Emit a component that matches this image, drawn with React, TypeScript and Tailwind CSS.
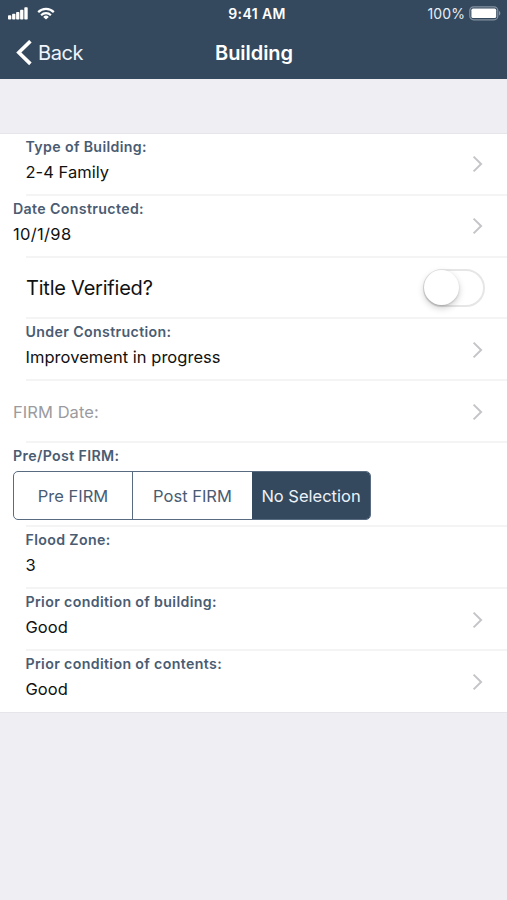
import type { ReactNode } from "react";

function Chevron({ offset = "mt-px" }: { offset?: string }) {
  return (
    <svg className={`mr-[24px] shrink-0 ${offset}`} width="11" height="18" viewBox="0 0 11 18" fill="none">
      <path d="M1.6 1.6 9.1 9 1.6 16.4" stroke="#c5c5c9" strokeWidth="2" />
    </svg>
  );
}

function Line() {
  return <div className="ml-[26px] h-[2px] shrink-0 bg-[#f4f4f5]" />;
}

function Label({ children }: { children: ReactNode }) {
  return (
    <div className="h-[25px] text-[14.2px] leading-[26px] font-semibold tracking-[0.35px] whitespace-nowrap text-[#4a5c72]">
      {children}
    </div>
  );
}

type FieldProps = {
  label: string;
  value: string;
  arrow?: boolean;
  flush?: boolean;
  track?: string;
  offset?: string;
};

function Field({ label, value, arrow = true, flush = false, track = "tracking-[0.03px]", offset }: FieldProps) {
  return (
    <div className={`flex h-[60px] items-center justify-between ${flush ? "pl-[13px]" : "pl-[25.5px]"}`}>
      <div className="h-[60px]">
        <Label>{label}</Label>
        <div className={`h-[26px] text-[16.5px] leading-[26px] whitespace-nowrap text-[#111] ${track}`}>{value}</div>
      </div>
      {arrow && <Chevron offset={offset} />}
    </div>
  );
}

function StatusBar() {
  return (
    <div className="grid h-[27px] grid-cols-3 items-center text-[14px] text-white">
      <div className="flex items-center gap-[9px] pl-[8px]">
        <svg width="20" height="13" viewBox="0 0 20 13" fill="#fff">
          <rect x="0" y="8.3" width="3.3" height="4.2" rx="0.8" />
          <rect x="4.1" y="6.8" width="3.3" height="5.7" rx="0.8" />
          <rect x="8.1" y="5" width="3.3" height="7.5" rx="0.8" />
          <rect x="12.1" y="2.8" width="3.3" height="9.7" rx="0.8" />
          <rect x="16.3" y="0.2" width="3.4" height="12.3" rx="0.8" />
        </svg>
        <svg width="18" height="13" viewBox="0 0 18 13" fill="none" stroke="#fff" strokeWidth="2.2">
          <path d="M1.2 5.1a11 11 0 0 1 15.6 0" />
          <path d="M4.1 8.2a7 7 0 0 1 9.8 0" />
          <path d="M9 12.6 6.2 9.9a4 4 0 0 1 5.6 0Z" fill="#fff" stroke="none" />
        </svg>
      </div>
      <div className="h-[27px] pl-[7px] text-center leading-[28px] font-semibold tracking-[0.4px] whitespace-nowrap">9:41 AM</div>
      <div className="flex h-[27px] items-center justify-end gap-[4px] pr-[6px]">
        <span className="leading-[28px] tracking-[0.1px] text-[#e6edf5]">100%</span>
        <svg width="32" height="15" viewBox="0 0 32 15">
          <rect x="0.8" y="0.8" width="28" height="13" rx="3.8" fill="none" stroke="#8492a1" strokeWidth="1.2" />
          <rect x="2.4" y="2.6" width="24.8" height="9.4" rx="1.6" fill="#fff" />
          <path d="M30 5v4.6c1.8-.7 1.8-3.9 0-4.6Z" fill="#8492a1" />
        </svg>
      </div>
    </div>
  );
}

export default function App() {
  return (
    <div className="h-[900px] w-[507px] overflow-hidden bg-[#eeeef3] font-['Inter','Liberation_Sans',sans-serif]">
      <header className="h-[79px] bg-[#34495e] text-white">
        <StatusBar />
        <div className="grid h-[52px] grid-cols-3">
          <div className="flex h-[52px] items-center gap-[5px] pl-[16px]">
            <svg width="17" height="26" viewBox="0 0 17 26" fill="none">
              <path d="M14.4 1.2 2.8 12.5l11.6 11.4" stroke="#fff" strokeWidth="3.6" />
            </svg>
            <span className="text-[20px] leading-[52px] tracking-[-0.4px] text-[#eef4fb]">Back</span>
          </div>
          <h1 className="h-[52px] pl-[1px] text-center text-[20px] leading-[52px] font-semibold tracking-[-0.05px]">Building</h1>
        </div>
      </header>

      <main className="mt-[54px] border-y border-[#e6e6ea] bg-white">
        <Field label="Type of Building:" value="2-4 Family" offset="mt-0" />
        <Line />
        <Field label="Date Constructed:" value="10/1/98" track="tracking-[0.33px]" offset="mt-0" flush />
        <Line />
        <div className="flex h-[59px] items-center justify-between pr-[22px] pl-[26px]">
          <span className="text-[20px] tracking-[-0.22px] text-[#111]">Title Verified?</span>
          <div className="flex h-[38px] w-[62px] items-center rounded-full border-2 border-[#e6e6e7] bg-white">
            <div className="-ml-px size-[35px] shrink-0 rounded-full bg-white shadow-[0_3px_7px_rgba(0,0,0,0.2),0_1px_2px_rgba(0,0,0,0.14)]" />
          </div>
        </div>
        <Line />
        <Field label="Under Construction:" value="Improvement in progress" />
        <Line />
        <div className="flex h-[60px] items-center justify-between pl-[13px]">
          <span className="pt-[2px] text-[16.5px] tracking-[0.06px] text-[#9b9b9f]">FIRM Date:</span>
          <Chevron />
        </div>
        <Line />
        <div className="h-[82px] pl-[13px]">
          <Label>Pre/Post FIRM:</Label>
          <div className="mt-[3px] grid h-[49px] w-[358px] grid-cols-[119px_119px_1fr] overflow-hidden rounded-[5px] border border-[#586b80] text-center text-[16.5px] leading-[48px] whitespace-nowrap text-[#4a5c72]">
            <div className="border-r border-[#586b80]">Pre FIRM</div>
            <div>Post FIRM</div>
            <div className="bg-[#34495e] text-[#edf2f8]">No Selection</div>
          </div>
        </div>
        <Line />
        <Field label="Flood Zone:" value="3" arrow={false} />
        <Line />
        <Field label="Prior condition of building:" value="Good" />
        <Line />
        <div className="pb-px">
          <Field label="Prior condition of contents:" value="Good" />
        </div>
      </main>
    </div>
  );
}
